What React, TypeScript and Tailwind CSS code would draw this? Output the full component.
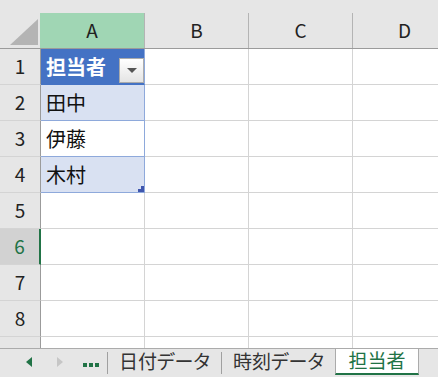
const FONT = "font-['Noto_Sans_CJK_JP','Noto_Sans',sans-serif]";

const names = ["田中", "伊藤", "木村"];

function DropButton() {
  return (
    <div className="absolute right-0 bottom-[1px] w-[25px] h-[25px] border border-[#ababab] bg-gradient-to-b from-white to-[#e4e4e4] flex items-center justify-center">
      <svg width="10" height="5" viewBox="0 0 10 5">
        <polygon points="0,0 10,0 5,5" fill="#555" />
      </svg>
    </div>
  );
}

function ResizeHandle() {
  return (
    <svg className="absolute right-0 bottom-0" width="6" height="6" viewBox="0 0 6 6">
      <rect x="3" y="0" width="3" height="3" fill="#3f56ae" />
      <rect x="0" y="3" width="6" height="3" fill="#3f56ae" />
    </svg>
  );
}

function Row({ n }: { n: number }) {
  const active = n === 6;
  const tableRow = n >= 1 && n <= 4;
  let aCls = "border-r border-b border-[#d4d4d4]";
  if (n === 1) aCls = "bg-[#4472c4] border-r border-r-[#8ea9db] border-b border-b-[#4472c4]";
  else if (tableRow)
    aCls = `border-r border-b border-[#8ea9db] ${n % 2 === 0 ? "bg-[#d9e1f2]" : "bg-white"}`;

  return (
    <div className="flex h-[36px] shrink-0">
      <div
        className={`w-[41px] shrink-0 flex items-center justify-center text-[19px] border-b border-b-[#d4d4d4] ${
          active
            ? "bg-[#d2d2d2] text-[#217346] border-r-2 border-r-[#217346]"
            : "bg-[#e6e6e6] text-[#222] border-r border-r-[#9b9b9b]"
        }`}
      >
        {n}
      </div>
      <div className={`relative w-[104px] shrink-0 flex items-center pl-[5px] text-[20px] ${aCls}`}>
        {n === 1 && (
          <>
            <span className="text-white font-bold">担当者</span>
            <DropButton />
          </>
        )}
        {n >= 2 && n <= 4 && <span className="text-[#111]">{names[n - 2]}</span>}
        {n === 4 && <ResizeHandle />}
      </div>
      <div className="w-[104px] shrink-0 border-r border-b border-[#d4d4d4]" />
      <div className="w-[104px] shrink-0 border-r border-b border-[#d4d4d4]" />
      <div className="w-[104px] shrink-0 border-r border-b border-[#d4d4d4]" />
    </div>
  );
}

function Tab({ label, w }: { label: string; w: string }) {
  return (
    <div className={`${w} shrink-0 h-full flex items-center justify-center pb-[3px] text-[19px] text-[#333]`}>
      {label}
    </div>
  );
}

export default function App() {
  return (
    <div className={`w-[438px] h-[377px] bg-[#e6e6e6] flex flex-col overflow-hidden ${FONT}`}>
      <div className="h-[13px] shrink-0" />

      <div className="flex-1 overflow-hidden bg-white flex flex-col">
        {/* column headers */}
        <div className="flex h-[36px] shrink-0 bg-[#e6e6e6] border-b border-[#9b9b9b] text-[19px] text-[#222]">
          <div className="w-[40px] shrink-0 flex items-end justify-end pr-[2px] pb-[3px]">
            <svg width="28" height="26" viewBox="0 0 28 26">
              <polygon points="28,0 28,26 0,26" fill="#b4b4b4" />
            </svg>
          </div>
          <div className="w-[105px] shrink-0 bg-[#a0d6b4] border-r border-[#b4b4b4] flex items-center justify-center">
            A
          </div>
          <div className="w-[104px] shrink-0 border-r border-[#b4b4b4] flex items-center justify-center">B</div>
          <div className="w-[104px] shrink-0 border-r border-[#b4b4b4] flex items-center justify-center">C</div>
          <div className="w-[104px] shrink-0 border-r border-[#b4b4b4] flex items-center justify-center">D</div>
        </div>
        {[1, 2, 3, 4, 5, 6, 7, 8, 9].map((n) => (
          <Row key={n} n={n} />
        ))}
      </div>

      {/* sheet tabs */}
      <div className="h-[29px] shrink-0 border-t border-[#ababab] flex items-start [font-feature-settings:'palt']">
        <div className="w-[107px] shrink-0 h-full flex items-center pl-[26px] pb-[3px]">
          <svg width="6" height="10" viewBox="0 0 6 10">
            <polygon points="6,0 6,10 0,5" fill="#217346" />
          </svg>
          <svg className="ml-[25px]" width="6" height="10" viewBox="0 0 6 10">
            <polygon points="0,0 0,10 6,5" fill="#c6c6c6" />
          </svg>
          <div className="ml-[20px] mt-[6px] flex gap-[2px]">
            <span className="w-[4px] h-[4px] bg-[#217346]" />
            <span className="w-[4px] h-[4px] bg-[#217346]" />
            <span className="w-[4px] h-[4px] bg-[#217346]" />
          </div>
        </div>
        <div className="w-px h-[22px] mt-[3px] bg-[#a0a0a0] shrink-0" />
        <Tab label="日付データ" w="w-[113px]" />
        <div className="w-px h-[22px] mt-[3px] bg-[#a0a0a0] shrink-0" />
        <Tab label="時刻データ" w="w-[113px]" />
        <div className="w-[84px] shrink-0 h-[26px] bg-white border-x border-[#ababab] border-b-2 border-b-[#217346] flex items-center justify-center text-[19px] text-[#217346] pb-[1px]">
          担当者
        </div>
      </div>
    </div>
  );
}
